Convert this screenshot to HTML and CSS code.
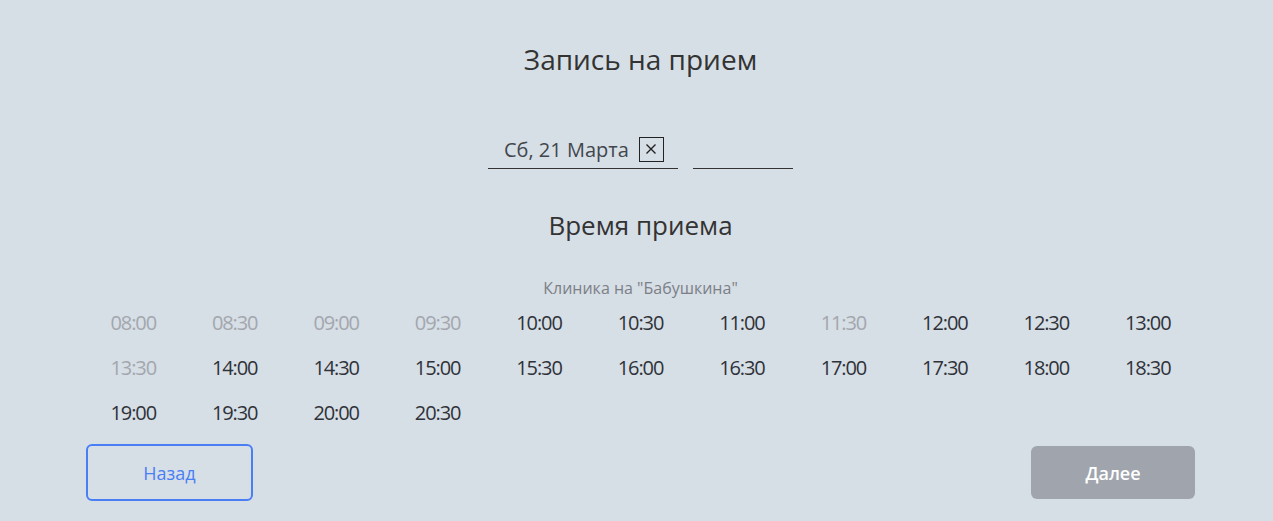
FILE: index.html
```html
<!DOCTYPE html>
<html lang="ru">
<head>
<meta charset="utf-8">
<title>Запись на прием</title>
<link rel="stylesheet" href="styles.css">
</head>
<body>
<main class="page">
  <h1 class="title">Запись на прием</h1>
  <div class="date-row">
    <div class="field field-date">
      <span class="field-text">Сб, 21 Марта</span>
      <span class="clear-box">
        <svg width="12" height="12" viewBox="0 0 12 12"><path d="M1.5 1.5 L10.5 10.5 M10.5 1.5 L1.5 10.5" stroke="#222" stroke-width="1.4" fill="none"/></svg>
      </span>
    </div>
    <div class="field field-time"></div>
  </div>
  <h2 class="subtitle">Время приема</h2>
  <div class="clinic">Клиника на "Бабушкина"</div>
  <div class="slots">
    <span class="slot off">08:00</span>
    <span class="slot off">08:30</span>
    <span class="slot off">09:00</span>
    <span class="slot off">09:30</span>
    <span class="slot">10:00</span>
    <span class="slot">10:30</span>
    <span class="slot">11:00</span>
    <span class="slot off">11:30</span>
    <span class="slot">12:00</span>
    <span class="slot">12:30</span>
    <span class="slot">13:00</span>
    <span class="slot off">13:30</span>
    <span class="slot">14:00</span>
    <span class="slot">14:30</span>
    <span class="slot">15:00</span>
    <span class="slot">15:30</span>
    <span class="slot">16:00</span>
    <span class="slot">16:30</span>
    <span class="slot">17:00</span>
    <span class="slot">17:30</span>
    <span class="slot">18:00</span>
    <span class="slot">18:30</span>
    <span class="slot">19:00</span>
    <span class="slot">19:30</span>
    <span class="slot">20:00</span>
    <span class="slot">20:30</span>
  </div>
  <div class="actions">
    <button class="btn btn-back">Назад</button>
    <button class="btn btn-next">Далее</button>
  </div>
</main>
</body>
</html>
```
FILE: styles.css
```css
html, body {
  margin: 0;
  padding: 0;
  background: #d6dee6;
}
body {
  padding-left: 8px;
  font-family: "Open Sans", "Noto Sans", sans-serif;
  color: #333;
}
.page {
  width: 1116px;
  margin: 0 auto;
  padding-top: 40px;
  display: flex;
  flex-direction: column;
  align-items: center;
}
.title {
  margin: 0;
  font-size: 28px;
  line-height: 38px;
  font-weight: 400;
  color: #333;
}
.date-row {
  margin-top: 52px;
  display: flex;
  gap: 15px;
}
.field {
  height: 39px;
  border-bottom: 1px solid #333;
  box-sizing: border-box;
  display: flex;
  align-items: center;
}
.field-date {
  width: 190px;
  padding-left: 16px;
  gap: 10px;
}
.field-time {
  width: 100px;
}
.field-text {
  font-size: 20px;
  color: #42464c;
}
.clear-box {
  width: 25px;
  height: 25px;
  box-sizing: border-box;
  border: 1px solid #222;
  display: flex;
  align-items: center;
  justify-content: center;
}
.subtitle {
  margin: 38px 0 0;
  font-size: 26px;
  line-height: 36px;
  font-weight: 400;
  color: #333;
}
.clinic {
  margin-top: 34px;
  font-size: 16px;
  line-height: 22px;
  color: #7c8086;
}
.slots {
  width: 100%;
  margin-top: 10px;
  display: grid;
  grid-template-columns: repeat(11, 1fr);
  row-gap: 17px;
}
.slot {
  text-align: center;
  font-size: 20px;
  line-height: 28px;
  letter-spacing: -1.1px;
  color: #2f3238;
}
.slot.off {
  color: #a3a7ad;
}
.actions {
  width: 1109px;
  margin-top: 17px;
  display: flex;
  justify-content: space-between;
  align-items: center;
}
.btn {
  font-family: "Open Sans", "Noto Sans", sans-serif;
  font-size: 18px;
  border-radius: 6px;
  box-sizing: border-box;
  cursor: pointer;
}
.btn-back {
  width: 167px;
  height: 57px;
  border: 2px solid #4a7ef5;
  background: transparent;
  color: #4a7ef5;
}
.btn-next {
  width: 164px;
  height: 53px;
  border: none;
  background: #a0a5ad;
  color: #fff;
  font-weight: 600;
}
```
